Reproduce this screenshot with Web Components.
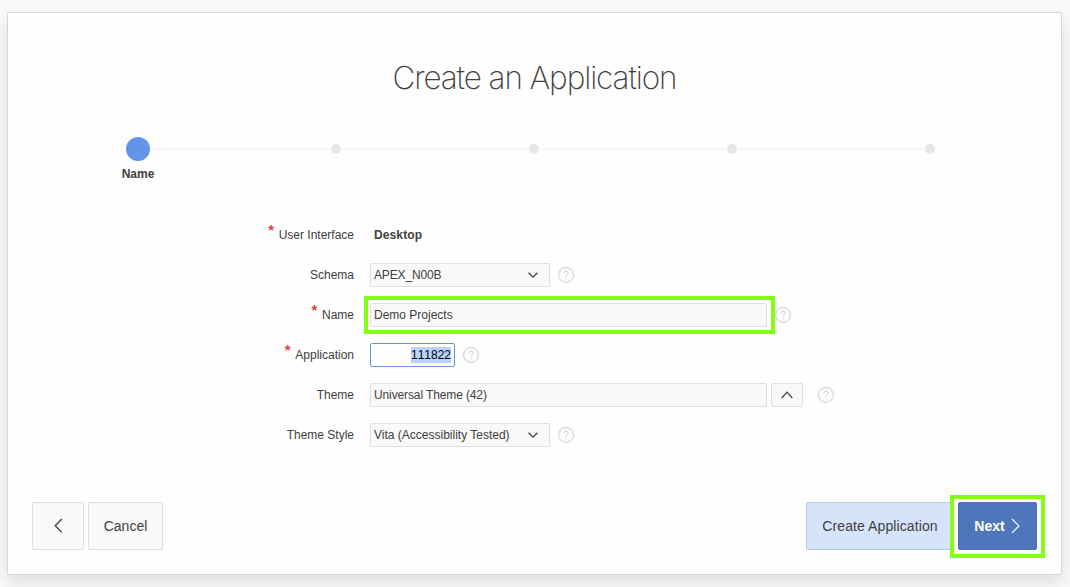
<!DOCTYPE html>
<html lang="en">
<head>
<meta charset="utf-8">
<title>Create an Application</title>
<style>
html,body{margin:0;height:100%;overflow:hidden}
body{background:#f9f9f9;color:#404040;font:12px/16px "Liberation Sans",Arial,sans-serif}
</style>
</head>
<body>
<wizard-card></wizard-card>
<script>
const define = (name, html) => customElements.define(name, class extends HTMLElement {
  constructor() {
    super();
    const t = document.createElement('template');
    t.innerHTML = typeof html === 'function' ? html(this) : html;
    this.attachShadow({mode: 'open'}).append(t.content.cloneNode(true));
  }
});

define('help-icon', `<style>
:host{display:block;width:16px;height:16px;flex:none}
svg{display:block}</style>
<svg width="16" height="16" viewBox="0 0 16 16" fill="none" stroke="#cbcbcb"><circle cx="8" cy="8" r="7.4"/><path d="M5.9 6.1a2.1 2.1 0 1 1 3.3 1.7c-.8.6-1.2.9-1.2 1.9"/><path d="M8 11.1v1.2"/></svg>`);

define('chevron-icon', el => {
  const p = {down: [10, 6, 'M.6.7 5 5.1 9.4.7', 1.3, '#404040'], up: [12, 8, 'M.7 7 6 1.2 11.3 7', 1.2, '#404040'],
    left: [9, 16, 'M7.8 1 1.2 7.7 7.8 14.4', 1.3, '#404040'], right: [9, 16, 'M1 1 7.9 7.9 1 14.8', 1.2, '#fff']}[el.getAttribute('dir')];
  return `<style>:host{display:block;flex:none}svg{display:block}</style>
<svg width="${p[0]}" height="${p[1]}" fill="none" stroke="${p[4]}" stroke-width="${p[3]}"><path d="${p[2]}"/></svg>`;
});

define('progress-train', `<style>
:host{display:flex;align-items:center;position:relative;height:24px;margin:0 126px 0 118px}
.line{position:absolute;left:24px;right:10px;top:11px;height:2px;background:#f6f6f6}
ol{list-style:none;display:flex;justify-content:space-between;align-items:center;width:100%;margin:0;padding:0}
li{width:10px;height:10px;border-radius:50%;background:#e6e6e6;position:relative}
li.on{width:24px;height:24px;background:#6394e7;margin-right:-7px}
.on span{position:absolute;top:29px;left:50%;transform:translateX(-50%);font-weight:700}
</style><div class="line"></div><ol><li class="on"><span>Name</span></li><li></li><li></li><li></li><li></li></ol>`);

define('form-row', el => `<style>
:host{display:flex;height:40px;align-items:center}
.label{width:346px;text-align:right;margin-right:16px;flex:none}
.label span{position:relative}
i{position:absolute;left:-10.5px;top:-6px;font:700 15px/16px "Liberation Sans",Arial,sans-serif;color:#e3403a}
</style><div class="label"><span>${el.hasAttribute('required') ? '<i>*</i>' : ''}${el.getAttribute('label')}</span></div><slot></slot>`);

define('field-box', `<style>
:host{display:flex;box-sizing:border-box;height:24px;width:180px;padding:0 11px 0 3px;align-items:center;justify-content:space-between;border:1px solid #dfdfdf;border-radius:2px;background:#f9f9f9;flex:none;position:relative;white-space:nowrap}
:host([wide]){width:397px}
:host([pick]){width:32px;padding:0;margin-left:4px;justify-content:center}
:host([number]){width:85px;padding:0 3px;justify-content:flex-end;background:#fff;border-color:#6394e7;color:#000;font-kerning:none}
:host([number]) span{background:#b9d3fc}
:host([marked])::after{content:"";position:absolute;left:-7px;top:-8px;width:403px;height:30px;border:4px solid #84ff12}
</style><span><slot></slot></span><slot name="icon"></slot>`);

define('wizard-button', `<style>
:host{display:flex;box-sizing:border-box;height:48px;align-items:center;justify-content:center;font-size:14px;border:1px solid #dfdfdf;border-radius:2px;background:#f9f9f9;position:relative;white-space:nowrap;flex:none}
:host([kind=create]){background:#d5e4fa;border-color:#b7c9e1;letter-spacing:.1px}
:host([kind=next]){background:#4f76ba;border-color:#4a70b1;color:#fff;font-weight:700;gap:6px;padding-right:1px}
:host([kind=next])::after{content:"";position:absolute;left:-9px;top:-8px;width:87px;height:55px;border:4px solid #84ff12}
</style><slot></slot>`);

define('wizard-card', `<style>
:host{display:flex;flex-direction:column;box-sizing:border-box;width:1055px;height:563px;margin:12px 0 0 7px;background:#fefefe;border:1px solid #d6d6d6;border-radius:2px;box-shadow:0 8px 16px rgba(0,0,0,.11)}
h1{font:200 31.5px/40px Inter,sans-serif;letter-spacing:-1.1px;text-align:center;margin:45px 0 39px;color:#404040}
main{margin-top:54px}
footer{display:flex;gap:4px;margin:auto 24px 24px}
b{font-size:12px;letter-spacing:.12px}
</style>
<h1><span>Create an Application</span></h1>
<progress-train></progress-train>
<main>
<form-row label="User Interface" required><b style="margin-left:4px">Desktop</b></form-row>
<form-row label="Schema"><field-box style="letter-spacing:-.15px">APEX_N00B<chevron-icon slot="icon" dir="down"></chevron-icon></field-box><help-icon style="margin-left:8px"></help-icon></form-row>
<form-row label="Name" required><field-box wide marked>Demo Projects</field-box><help-icon style="margin-left:8px"></help-icon></form-row>
<form-row label="Application" required><field-box number>111822</field-box><help-icon style="margin-left:8px"></help-icon></form-row>
<form-row label="Theme"><field-box wide style="letter-spacing:-.12px">Universal Theme (42)</field-box><field-box pick><chevron-icon slot="icon" dir="up"></chevron-icon></field-box><help-icon style="margin-left:15.4px"></help-icon></form-row>
<form-row label="Theme Style"><field-box>Vita (Accessibility Tested)<chevron-icon slot="icon" dir="down"></chevron-icon></field-box><help-icon style="margin-left:8px"></help-icon></form-row>
</main>
<footer>
<wizard-button style="width:52px"><chevron-icon dir="left"></chevron-icon></wizard-button>
<wizard-button style="width:75px">Cancel</wizard-button>
<wizard-button kind="create" style="width:148px;margin-left:auto">Create Application</wizard-button>
<wizard-button kind="next" style="width:79px"><span>Next</span><chevron-icon dir="right"></chevron-icon></wizard-button>
</footer>`);
</script>
</body>
</html>
